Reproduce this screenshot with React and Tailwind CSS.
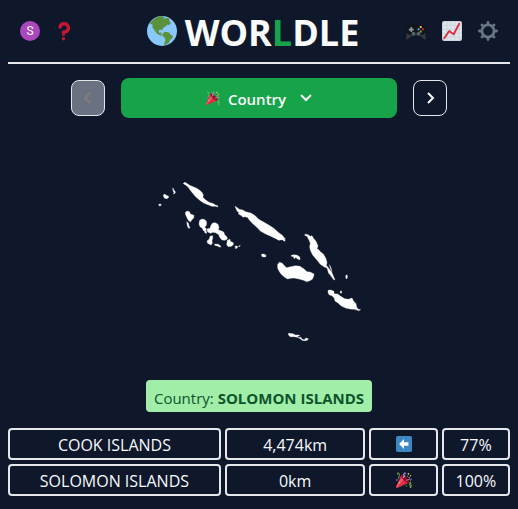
import React from "react";

function Popper({ className }) {
  return (
    <svg viewBox="0 0 36 36" className={className} aria-hidden="true">
      <path fill="#DD2E44" d="M11.626 7.488c-.112.112-.197.247-.268.395l-.008-.008L.134 33.141l.011.011c-.208.403.14 1.223.853 1.937.713.713 1.533 1.061 1.936.853l.01.01L28.21 24.735l-.008-.009c.147-.07.282-.155.395-.269 1.562-1.562-.971-6.627-5.656-11.313-4.687-4.686-9.752-7.218-11.315-5.656z" />
      <path fill="#EA596E" d="M13 12L.416 32.506l-.282.635.011.011c-.208.403.14 1.223.853 1.937.232.232.473.408.709.557L17 17l-4-5z" />
      <path fill="#A0041E" d="M23.012 13.066c4.67 4.672 7.263 9.652 5.789 11.124-1.473 1.474-6.453-1.118-11.126-5.788-4.671-4.672-7.263-9.654-5.79-11.127 1.474-1.473 6.454 1.119 11.127 5.791z" />
      <path fill="#AA8DD8" d="M18.59 13.609c-.199.161-.459.245-.734.215-.868-.094-1.598-.396-2.109-.873-.541-.505-.808-1.183-.735-1.862.128-1.192 1.324-2.286 3.363-2.066.793.085 1.147-.17 1.159-.292.014-.121-.277-.446-1.07-.532-.868-.094-1.598-.396-2.11-.873-.541-.505-.809-1.183-.735-1.862.13-1.192 1.325-2.286 3.362-2.065.578.062.883-.057 1.012-.134.103-.063.144-.123.148-.158.012-.121-.275-.446-1.07-.532-.549-.06-.947-.552-.886-1.102.059-.549.55-.946 1.101-.886 2.037.219 2.973 1.542 2.844 2.735-.13 1.194-1.325 2.286-3.364 2.067-.578-.063-.88.057-1.01.134-.103.062-.145.123-.149.157-.013.122.276.446 1.071.532 2.037.22 2.973 1.542 2.844 2.735-.129 1.192-1.324 2.286-3.362 2.065-.578-.062-.882.058-1.012.134-.104.064-.144.124-.148.158-.013.121.276.446 1.07.532.548.06.947.553.886 1.102-.028.274-.167.511-.366.671z" />
      <path fill="#77B255" d="M30.661 22.857c1.973-.557 3.334.323 3.658 1.478.324 1.154-.378 2.615-2.35 3.17-.77.216-1.001.584-.97.701.034.118.425.312 1.193.095 1.972-.555 3.333.325 3.657 1.479.326 1.155-.378 2.614-2.351 3.17-.769.216-1.001.585-.967.702.033.117.423.311 1.192.095.53-.149 1.084.16 1.233.691.148.532-.161 1.084-.693 1.234-1.971.555-3.333-.323-3.659-1.479-.324-1.154.379-2.613 2.353-3.169.77-.217 1.001-.584.967-.702-.032-.117-.422-.312-1.19-.096-1.974.556-3.334-.322-3.659-1.479-.325-1.154.378-2.613 2.351-3.17.768-.215.999-.585.967-.701-.034-.118-.423-.312-1.192-.096-.532.15-1.083-.16-1.233-.691-.149-.53.161-1.082.693-1.232z" />
      <path fill="#AA8DD8" d="M23.001 20.16c-.294 0-.584-.129-.782-.375-.345-.432-.274-1.061.156-1.406.218-.175 5.418-4.259 12.767-3.208.547.078.927.584.849 1.131-.078.546-.58.93-1.132.848-6.493-.922-11.187 2.754-11.233 2.791-.186.148-.406.219-.625.219z" />
      <path fill="#77B255" d="M5.754 16c-.095 0-.192-.014-.288-.042-.529-.159-.829-.716-.67-1.245 1.133-3.773 2.16-9.794.898-11.364-.141-.178-.354-.353-.842-.316-.938.072-.849 2.051-.848 2.071.042.551-.372 1.031-.922 1.072-.559.034-1.031-.372-1.072-.923-.103-1.379.326-4.035 2.692-4.214 1.056-.08 1.933.287 2.552 1.057 2.371 2.951-.036 11.506-.542 13.192-.13.433-.528.712-.958.712z" />
      <g fill="#5C913B">
        <circle cx="25.5" cy="9.5" r="1.5" />
        <circle cx="32.5" cy="19.5" r="1.5" />
        <circle cx="23.5" cy="31.5" r="1.5" />
      </g>
      <circle cx="2" cy="18" r="2" fill="#9266CC" />
      <g fill="#FFCC4D">
        <circle cx="28" cy="4" r="2" />
        <circle cx="32.5" cy="8.5" r="1.5" />
        <circle cx="29.5" cy="12.5" r="1.5" />
        <circle cx="7.5" cy="23.5" r="1.5" />
      </g>
    </svg>
  );
}

function Globe() {
  return (
    <svg viewBox="0 0 90 90" className="size-[30px] shrink-0" aria-hidden="true">
      <circle cx="45" cy="45" r="45" fill="#88C9F9" />
      <path
        fill="#5C913B"
        d="M11 19C18 10 28 3 37 1c6-1 12 1 17 2l-5 4 5 1 6-3 8 4-2 6 4 3 1 5-6 4-5-1-3 4-5 3-5 5-1 5-4-2-6 1-1 5 3 4 5-2 1 3-3 3 5 3-1 2-9-3-8-6-6-9-6-8 1-7-4-3-5 1zM48 52l5-4 9 0 7 4 1 4 8 4-2 7-7 5-3 8-8 5-7 4 1-7 3-9-1-6-6-6-2-5z"
      />
    </svg>
  );
}

function Question() {
  return (
    <svg viewBox="0 0 36 36" className="size-5" fill="#BE1931" aria-hidden="true">
      <path d="M17 27c-1.657 0-3-1.343-3-3v-4c0-1.657 1.343-3 3-3 .603-.006 6-1 6-5 0-2-2-4-5-4-2.441 0-4 2-4 3 0 1.657-1.343 3-3 3s-3-1.343-3-3c0-4.878 4.58-9 10-9 8 0 11 5.982 11 11 0 4.145-2.277 7.313-6.413 8.92-.9.351-1.79.587-2.587.747V24c0 1.657-1.343 3-3 3z" />
      <circle cx="17" cy="32" r="3" />
    </svg>
  );
}

function Gamepad() {
  return (
    <svg viewBox="0 0 36 36" className="size-5" aria-hidden="true">
      <path fill="#31373D" d="M2 20C1 25 0 28 0 31c0 3 3 3 5 1l7-7h12l7 7c2 2 5 2 5-1 0-3-1-6-2-11z" />
      <path fill="#141516" d="M9 7c2-1 4-1 6 1h6c2-2 4-2 6-1 5 0 8 4 8 9s-3 9-8 9c-2 0-4-1-5-2h-8c-1 1-3 2-5 2-5 0-8-4-8-9s3-9 8-9z" />
      <path fill="#8899A6" d="M8 11h3v3h3v3h-3v3H8v-3H5v-3h3z" />
      <circle cx="13.500" cy="23" r="3.500" fill="#55626D" />
      <circle cx="22.500" cy="23" r="3.500" fill="#55626D" />
      <circle cx="26.500" cy="11" r="2" fill="#FFCC4D" />
      <circle cx="30.500" cy="15" r="2" fill="#DD2E44" />
      <circle cx="22.500" cy="15" r="2" fill="#55ACEE" />
      <circle cx="26.500" cy="19" r="2" fill="#77B255" />
    </svg>
  );
}

function Chart() {
  return (
    <svg viewBox="0 0 36 36" className="size-5" aria-hidden="true">
      <rect width="36" height="36" rx="4" fill="#CCD6DD" />
      <rect x="2" y="2" width="32" height="32" rx="2" fill="#E1E8ED" />
      <path stroke="#CCD6DD" strokeWidth="2" d="M9 2v32M16 2v32M23 2v32M30 2v32M2 8h32M2 15h32M2 22h32M2 29h32" />
      <path fill="none" stroke="#DD2E44" strokeWidth="3.500" strokeLinecap="round" strokeLinejoin="round" d="M4 31l9-13 8 6L31 5" />
    </svg>
  );
}

function Gear() {
  return (
    <svg viewBox="0 0 36 36" className="size-5" fill="none" stroke="#66757F" aria-hidden="true">
      <circle cx="18" cy="18" r="11" strokeWidth="5" />
      <path strokeWidth="5" strokeLinecap="round" d="M18 2.500v4M18 29.500v4M2.500 18h4M29.500 18h4M7 7l3 3M26 26l3 3M29 7l-3 3M10 26l-3 3" />
    </svg>
  );
}

function ArrowLeft() {
  return (
    <svg viewBox="0 0 36 36" className="mx-auto size-4" role="img" aria-label="West">
      <rect width="36" height="36" rx="4" fill="#3B88C3" />
      <path fill="#fff" d="M7 18L18 7v7h10v8H18v7z" />
    </svg>
  );
}

function Chevron({ d, className }) {
  return (
    <svg viewBox="0 0 12 12" className={className} fill="none" stroke="currentColor" strokeWidth="2" aria-hidden="true">
      <path d={d} />
    </svg>
  );
}

function IslandMap() {
  return (
    <svg viewBox="5 0 645 510" className="w-[215px]" fill="#fff" stroke="#fff" role="img" aria-label="Country outline">
      <path d="M25 91l6-1 2 4-6 2zM39 63l5-3 3 4 7 2 1 4-5 4-7-1-3-5zM67 42l3 2-1 4 5 3 1 6-6 3 2-5-3-4z" />
      <path d="M99 28l5-3 7 4 7 5 10 4 11 5 9 6 8 7 3 8-2 5 8 8 11 8 14 4 5 4 7 2 1 4-8-2-10 0-12-5-13-5-10-7-14-12-7-8-9-11-6-9-8-7-6-3z" />
      <path d="M106 114l5-3 7 3 2 6 11 4-1 8-6 6-4 6-6-5-5-10-4-9zM109 143l5 4 2 8 3 7-4 1-4-7z" />
      <path d="M148 139l7-4 9 2 5 7-1 10-5 6 5 4 0 5-8 2-5-9-6-4-3-8zM162 169l6 2 1 7-5-1zM170 165l9-2 3-9 5-7 8-1 8 5 3 9-2 8 8 2 8 4 3 8 7 7 1 6-7 4-9-1-6-7-4-9-9-6-9-1-6 3-9-4z" />
      <path d="M179 187l8-2 0 7-2 8 1 8-4 5-10-5-2-7 7-6zM193 210l11 1 7 5-1 4-9-4-8-2zM231 199l8-3 1 6 9 4 0 6-6 5-9 1-5-6zM254 216l7 0 0 6-5 2zM264 217l6-3-3 4z" />
      <path d="M254 97l7 4 6 5 10 2 9 5 6 2 9 2 12 7 12 12 20 11 15 9 12 8 13 12 10 7 10 12-5-1 4 8-8-5-10 1-14-6-12-6-14-6-16-9-12-13-12-10-9-10-6-8-8-2-5 2-6-6-8-4 2-4-6-5z" />
      <path d="M374 185l8 0 6 5 3 7-5 2-7-4-4-5zM388 182l10 9 6 6 0 4-7-3-8-8zM333 241l8-1 6 4-1 5-11-1zM423 244l9-2 9 2 8 6 0 7-8-2-4-5-6 4-1-6-7-1z" />
      <path d="M382 271l5-6 8 2 8 9 6 5 12-3 15-3 13 2 12 8 9 8 9 1 12 6-1 7-4 9-8 4-9 3-9-4-14-4-15-3-11 1-8 2-10-6-10-9-6-9-4-8z" />
      <path d="M465 180l8 2 7 5 5-2 4 7 8 10 6 14-3 8 6 4 4 5 9 7 8 14 3 12-2 8 6 7 10 13 5 12 5 12-5-2-9-13-5-5-5-16-8-3-12-8-12-15-11-13-7-14-2-11 2-10-4-10-6-11-7-3z" />
      <path d="M537 272l4 7 4 13-4-7zM587 303l4 1 0 8-3 3-2-6zM571 350l4 3-2 5-4-2z" />
      <path d="M533 349l9-1 9 4 0 7 11 1 9 7 12 7 12 2 10-4 4 8 8 9 2 11 5 6 7 1-6 3-12-4-14-1-13-3-13-6-11-10-8-5-2-8-7-8-9-3-3-7z" />
      <path d="M414 478l14 1 7 4 11 0 2 3-7 1 3 4 8-1 3 6 8 1 3-5 8 2-3 5-9 1-7-1-5-5-9-4-11-2-10 0-5-4z" />
    </svg>
  );
}

const guesses = [
  { name: "COOK ISLANDS", distance: "4,474km", icon: <ArrowLeft />, score: "77%" },
  { name: "SOLOMON ISLANDS", distance: "0km", icon: <Popper className="mx-auto size-4" />, score: "100%" },
];

const cell = "h-8 rounded border-2 border-gray-200 text-center text-base";
const textCell = "px-0 pt-0.5 pb-0 leading-[26px]";

export default function App() {
  return (
    <div className="min-h-screen bg-slate-900 px-2 font-['Open_Sans','Noto_Sans',sans-serif] text-slate-50">
      <header className="flex h-16 items-center border-b-2 border-gray-200 px-3">
        <div className="flex w-20 items-center gap-3.5">
          <button type="button" aria-label="Profile" className="flex size-5 items-center justify-center rounded-full bg-[#ab47bc] font-['Roboto',sans-serif] text-xs text-white">
            S
          </button>
          <button type="button" aria-label="Help">
            <Question />
          </button>
        </div>
        <h1 className="flex flex-1 items-center justify-center gap-2 text-4xl font-bold">
          <Globe />
          <span className="pt-1">
            WOR<span className="text-[#16a34a]">L</span>DLE
          </span>
        </h1>
        <div className="flex items-center gap-4">
          <button type="button" aria-label="Games"><Gamepad /></button>
          <button type="button" aria-label="Statistics"><Chart /></button>
          <button type="button" aria-label="Settings"><Gear /></button>
        </div>
      </header>

      <main>
        <div className="mx-auto mt-3.5 flex w-3/4 items-center gap-4">
          <button type="button" disabled aria-label="Previous" className="flex h-9 w-[34px] items-center justify-center rounded-lg border border-gray-200 bg-gray-500 text-[#827e7b]">
            <Chevron className="size-3" d="M8 1L3 6l5 5" />
          </button>
          <button type="button" className="flex h-10 flex-1 items-center justify-center rounded-lg bg-[#16a34a] text-[15px] font-semibold">
            <Popper className="size-3.5" />
            <span className="ml-2 pt-0.5">Country</span>
            <Chevron className="ml-3.5 size-3" d="M1 3l5 5 5-5" />
          </button>
          <button type="button" aria-label="Next" className="flex h-9 w-[34px] items-center justify-center rounded-lg border border-gray-200">
            <Chevron className="size-3" d="M4 1l5 5-5 5" />
          </button>
        </div>

        <div className="flex justify-center pt-14 pb-9">
          <IslandMap />
        </div>

        <div className="flex justify-center">
          <p className="rounded bg-[#a0eea8] px-2 pt-1.5 pb-0.5 text-[15px] leading-6 text-green-900">
            Country: <strong className="font-bold">SOLOMON ISLANDS</strong>
          </p>
        </div>

        <table aria-label="Guesses" className="mt-4 block w-full">
          <tbody className="grid gap-1">
            {guesses.map((g) => (
              <tr key={g.name} className="grid grid-cols-7 gap-1">
                <td className={`${cell} ${textCell} col-span-3`}>{g.name}</td>
                <td className={`${cell} ${textCell} col-span-2`}>{g.distance}</td>
                <td className={`${cell} flex items-center p-0`}>{g.icon}</td>
                <td className={`${cell} ${textCell}`}>{g.score}</td>
              </tr>
            ))}
          </tbody>
        </table>
      </main>
    </div>
  );
}
